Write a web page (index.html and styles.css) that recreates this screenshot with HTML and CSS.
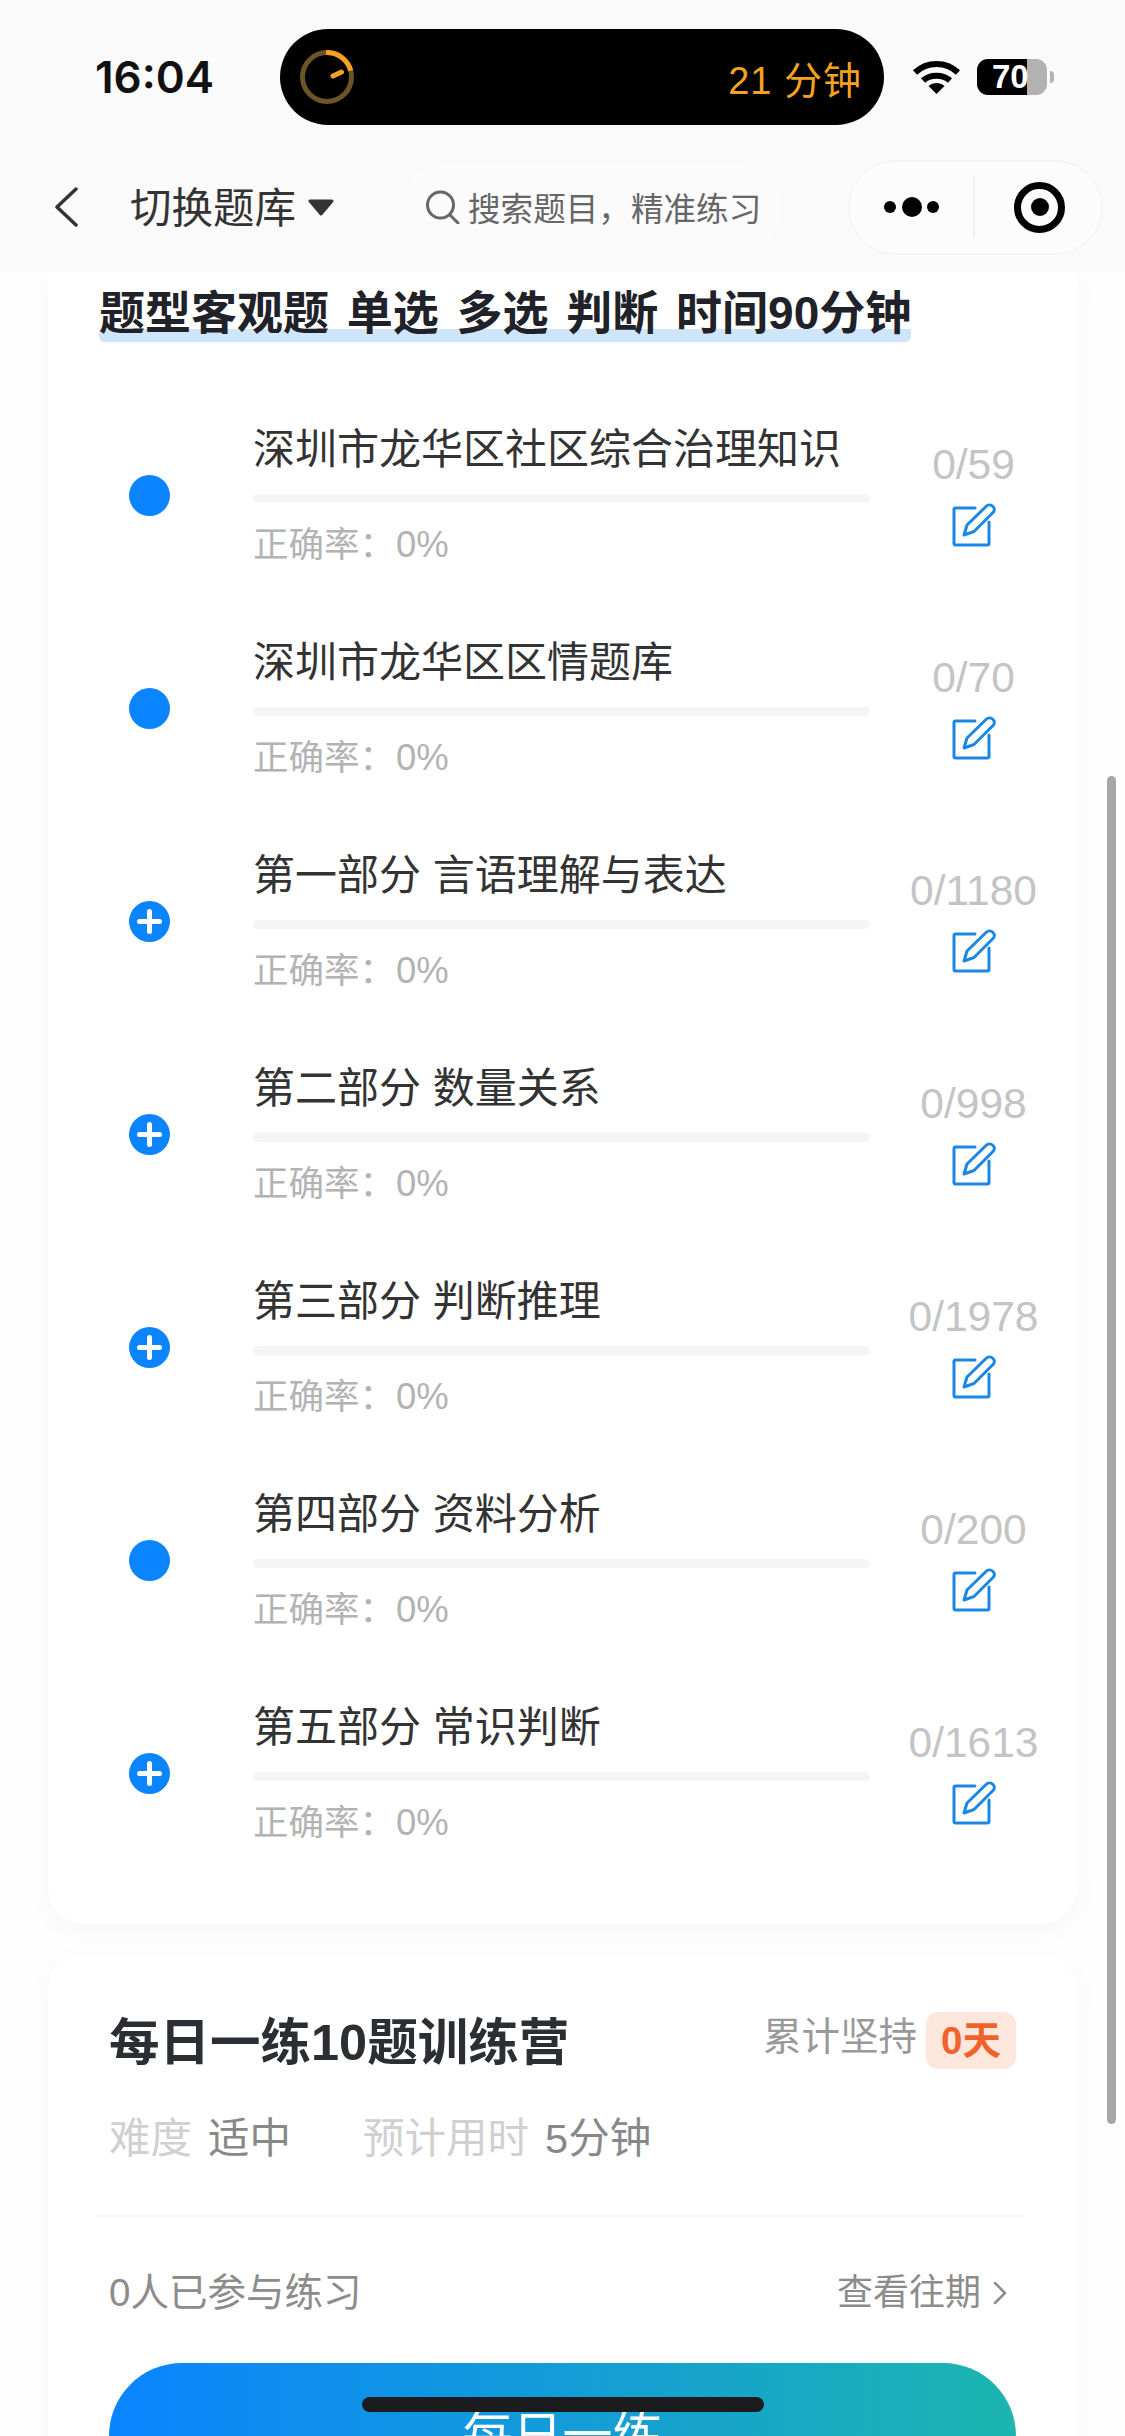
FILE: index.html
```html
<!DOCTYPE html>
<html lang="zh-CN">
<head>
    <meta charset="UTF-8">
    <meta name="viewport" content="width=device-width, initial-scale=1.0">
    <title>切换题库</title>
    <link rel="stylesheet" href="styles.css">
</head>
<body>
<svg class="defs" width="0" height="0">
    <symbol id="edit" viewBox="0 0 44 44">
        <path d="M23 5H3.500A1.500 1.500 0 0 0 2 6.500V40.500A1.500 1.500 0 0 0 3.500 42H35.500A1.500 1.500 0 0 0 37 40.500V19" fill="none" stroke="currentColor" stroke-width="3" stroke-linecap="round"/>
        <path d="M12 32L15 22L34 3.500C36 1.500 39 1.500 41 3.500C43 5.500 42.500 8 41 9.500L22 28.500Z" fill="none" stroke="currentColor" stroke-width="3" stroke-linejoin="round"/>
    </symbol>
</svg>

<div class="screen">
    <div class="top-bars">
        <!-- Status bar -->
        <div class="status-bar">
            <span class="time">16:04</span>
            <div class="island">
                <svg class="timer-ring" width="54" height="54" viewBox="0 0 54 54">
                    <circle cx="27" cy="27" r="24.500" fill="none" stroke="#6b5526" stroke-width="5"/>
                    <path d="M26 2.500A24.500 24.500 0 0 1 50.700 20.700" fill="none" stroke="#f5a31f" stroke-width="5"/>
                    <path d="M33 26L41.500 22" fill="none" stroke="#f5a31f" stroke-width="5" stroke-linecap="round"/>
                </svg>
                <span class="timer-text">21 分钟</span>
            </div>
            <svg class="wifi" width="49" height="34" viewBox="0 0 49 34">
                <path d="M3 12.500C15 1 34 1 46 12.500" fill="none" stroke="#000" stroke-width="6"/>
                <path d="M11 20.500C18 14 31 14 38 20.500" fill="none" stroke="#000" stroke-width="6"/>
                <path d="M24.500 34L16.500 26C21 22 28 22 32.500 26Z" fill="#000"/>
            </svg>
            <div class="battery">70</div>
        </div>

        <!-- Nav bar -->
        <div class="nav-bar">
            <svg class="back" width="24" height="40" viewBox="0 0 24 40">
                <path d="M22 2L3 20L22 38" fill="none" stroke="#333" stroke-width="3.500" stroke-linecap="round" stroke-linejoin="round"/>
            </svg>
            <span class="bank-name">切换题库</span>
            <svg class="caret" width="28" height="17" viewBox="0 0 28 17">
                <path d="M3 2H25L14 15Z" fill="#333" stroke="#333" stroke-width="3" stroke-linejoin="round"/>
            </svg>
            <div class="search">
                <svg width="35" height="34" viewBox="0 0 35 34">
                    <circle cx="15.500" cy="15" r="13" fill="none" stroke="#666" stroke-width="3"/>
                    <path d="M25 25L33 33" fill="none" stroke="#666" stroke-width="3" stroke-linecap="round"/>
                </svg>
                <span class="search-text">搜索题目，精准练习</span>
            </div>
            <div class="capsule">
                <div class="capsule-dots"><i></i><i class="big"></i><i></i></div>
                <div class="capsule-target"><i></i></div>
            </div>
        </div>
    </div>

    <div class="content">
        <!-- Question bank card -->
        <div class="card bank-card">
            <h2 class="bank-title"><span>题型客观题 单选 多选 判断 时间90分钟</span></h2>

            <div class="row">
                <span class="dot"></span>
                <div class="row-main">
                    <div class="row-name">深圳市龙华区社区综合治理知识</div>
                    <div class="progress"></div>
                    <div class="rate">正确率：<span class="rate-num">0%</span></div>
                </div>
                <div class="row-side">
                    <div class="count">0/59</div>
                    <svg class="edit-icon"><use href="#edit"/></svg>
                </div>
            </div>

            <div class="row">
                <span class="dot"></span>
                <div class="row-main">
                    <div class="row-name">深圳市龙华区区情题库</div>
                    <div class="progress"></div>
                    <div class="rate">正确率：<span class="rate-num">0%</span></div>
                </div>
                <div class="row-side">
                    <div class="count">0/70</div>
                    <svg class="edit-icon"><use href="#edit"/></svg>
                </div>
            </div>

            <div class="row">
                <span class="dot plus"></span>
                <div class="row-main">
                    <div class="row-name">第一部分 言语理解与表达</div>
                    <div class="progress"></div>
                    <div class="rate">正确率：<span class="rate-num">0%</span></div>
                </div>
                <div class="row-side">
                    <div class="count">0/1180</div>
                    <svg class="edit-icon"><use href="#edit"/></svg>
                </div>
            </div>

            <div class="row">
                <span class="dot plus"></span>
                <div class="row-main">
                    <div class="row-name">第二部分 数量关系</div>
                    <div class="progress"></div>
                    <div class="rate">正确率：<span class="rate-num">0%</span></div>
                </div>
                <div class="row-side">
                    <div class="count">0/998</div>
                    <svg class="edit-icon"><use href="#edit"/></svg>
                </div>
            </div>

            <div class="row">
                <span class="dot plus"></span>
                <div class="row-main">
                    <div class="row-name">第三部分 判断推理</div>
                    <div class="progress"></div>
                    <div class="rate">正确率：<span class="rate-num">0%</span></div>
                </div>
                <div class="row-side">
                    <div class="count">0/1978</div>
                    <svg class="edit-icon"><use href="#edit"/></svg>
                </div>
            </div>

            <div class="row">
                <span class="dot"></span>
                <div class="row-main">
                    <div class="row-name">第四部分 资料分析</div>
                    <div class="progress"></div>
                    <div class="rate">正确率：<span class="rate-num">0%</span></div>
                </div>
                <div class="row-side">
                    <div class="count">0/200</div>
                    <svg class="edit-icon"><use href="#edit"/></svg>
                </div>
            </div>

            <div class="row">
                <span class="dot plus"></span>
                <div class="row-main">
                    <div class="row-name">第五部分 常识判断</div>
                    <div class="progress"></div>
                    <div class="rate">正确率：<span class="rate-num">0%</span></div>
                </div>
                <div class="row-side">
                    <div class="count">0/1613</div>
                    <svg class="edit-icon"><use href="#edit"/></svg>
                </div>
            </div>
        </div>

        <!-- Daily practice card -->
        <div class="card daily-card">
            <div class="daily-head">
                <h2 class="daily-title">每日一练10题训练营</h2>
                <div class="streak">
                    <span class="streak-label">累计坚持</span>
                    <span class="streak-badge">0天</span>
                </div>
            </div>
            <div class="daily-meta">
                <span class="meta-label">难度</span>
                <span class="meta-value">适中</span>
                <span class="meta-label meta-gap">预计用时</span>
                <span class="meta-value">5分钟</span>
            </div>
            <div class="daily-divider"></div>
            <div class="daily-foot">
                <span class="joined">0人已参与练习</span>
                <span class="history">查看往期
                    <svg width="14" height="24" viewBox="0 0 14 24">
                        <path d="M2 2L12 12L2 22" fill="none" stroke="#8c8c8c" stroke-width="2.500" stroke-linecap="round" stroke-linejoin="round"/>
                    </svg>
                </span>
            </div>
            <div class="start-btn">每日一练</div>
        </div>
    </div>

    <div class="scrollbar"></div>
    <div class="home-bar"></div>
</div>
</body>
</html>
```

FILE: styles.css
```css
* {
    box-sizing: border-box;
}
body {
    margin: 0;
    background-color: #fff;
    font-family: "Liberation Sans", "Noto Sans CJK SC", sans-serif;
    overflow: hidden;
}
.defs {
    display: block;
}
.screen {
    position: relative;
    height: 2436px;
    overflow: hidden;
    background-color: #fefefe;
}
.top-bars {
    position: relative;
    z-index: 1;
    background-color: #fafafa;
}

/* Status bar */
.status-bar {
    display: flex;
    align-items: center;
    height: 154px;
    padding-left: 95px;
}
.time {
    width: 185px;
    font-family: Inter, sans-serif;
    font-size: 44px;
    font-weight: 600;
    color: #111;
}
.island {
    display: flex;
    align-items: center;
    justify-content: space-between;
    width: 604px;
    height: 96px;
    padding: 0 22px 0 20px;
    border-radius: 48px;
    background-color: #000;
}
.timer-text {
    font-size: 38px;
    color: #f5a31f;
    letter-spacing: 1px;
}
.wifi {
    margin-left: 28px;
}
.battery {
    position: relative;
    width: 70px;
    height: 36px;
    margin-left: 16px;
    padding-left: 15px;
    border-radius: 11px;
    background: linear-gradient(90deg, #000 71%, #b2b2b2 71%);
    font-size: 33px;
    font-weight: bold;
    line-height: 36px;
    color: #fff;
}
.battery::after {
    content: "";
    position: absolute;
    left: 73px;
    top: 12px;
    width: 4px;
    height: 12px;
    border-radius: 0 6px 6px 0;
    background-color: #b2b2b2;
}

/* Nav bar */
.nav-bar {
    display: flex;
    align-items: center;
    height: 118px;
    padding: 0 22px 12px 54px;
}
.bank-name {
    margin: 0 0 5px 52px;
    font-size: 41.500px;
    color: #333;
}
.caret {
    margin-left: 11px;
}
.search {
    display: flex;
    align-items: center;
    gap: 8px;
    height: 88px;
    margin-left: 69px;
    padding: 0 21px;
    border-radius: 40px;
    background-color: #fbfbfb;
    font-size: 32.600px;
    color: #666;
    white-space: nowrap;
}
.search-text {
    margin-bottom: 2px;
}
.capsule {
    display: flex;
    align-items: center;
    width: 255px;
    height: 95px;
    margin-left: auto;
    border: 2px solid #f5f5f5;
    border-radius: 48px;
    background-color: #fcfcfc;
}
.capsule-dots {
    display: flex;
    align-items: center;
    justify-content: center;
    gap: 5.500px;
    width: 125px;
    height: 61px;
    border-right: 2px solid #f0f0f0;
}
.capsule-dots i {
    width: 12px;
    height: 12px;
    border-radius: 50%;
    background-color: #000;
}
.capsule-dots .big {
    width: 20px;
    height: 20px;
}
.capsule-target {
    display: flex;
    align-items: center;
    justify-content: center;
    width: 51px;
    height: 51px;
    margin-left: 39px;
    border: 7px solid #000;
    border-radius: 50%;
}
.capsule-target i {
    width: 18px;
    height: 18px;
    border-radius: 50%;
    background-color: #000;
}

/* Cards */
.content {
    padding: 0 48px;
}
.card {
    background-color: #fff;
    border-radius: 36px;
    box-shadow: 0 6px 24px rgba(0, 0, 0, 0.035);
}
.bank-card {
    padding: 12px 0 43px;
    border-radius: 0 0 36px 36px;
}
.bank-title {
    margin: 0 0 48px 51px;
    font-size: 46px;
    font-weight: bold;
    line-height: 58px;
    word-spacing: 5px;
    color: #1f2329;
}
.bank-title span {
    display: inline-block;
    border-radius: 6px;
    background: linear-gradient(#cfe5fb, #cfe5fb) bottom / 100% 13px no-repeat;
    white-space: pre;
}

/* Bank rows */
.row {
    display: flex;
    height: 213px;
    padding: 30px 0 0 81px;
}
.dot {
    position: relative;
    flex: none;
    width: 41px;
    height: 41px;
    margin: 55px 83px 0 0;
    border-radius: 50%;
    background-color: #0a84ff;
}
.plus::before,
.plus::after {
    content: "";
    position: absolute;
    left: 8px;
    top: 18px;
    width: 25px;
    height: 5px;
    border-radius: 3px;
    background-color: #fff;
}
.plus::after {
    transform: rotate(90deg);
}
.row-main {
    width: 617px;
}
.row-name {
    font-size: 42px;
    line-height: 60px;
    color: #333;
    white-space: pre;
}
.progress {
    height: 9px;
    margin-top: 14px;
    border-radius: 5px;
    background-color: #f5f5f5;
}
.rate {
    margin-top: 18px;
    font-size: 35.500px;
    line-height: 48px;
    color: #b3b3b3;
}
.rate-num {
    margin-left: 1px;
    font-size: 36.500px;
}
.row-side {
    display: flex;
    flex: 1;
    flex-direction: column;
    align-items: center;
    padding-top: 20px;
}
.count {
    font-size: 42.500px;
    line-height: 50px;
    color: #c4c4c4;
}
.edit-icon {
    width: 44px;
    height: 44px;
    margin-top: 13px;
    color: #1a86e6;
}

/* Daily practice */
.daily-card {
    height: 600px;
    margin-top: 30px;
    padding: 58px 61px 0;
}
.daily-head {
    display: flex;
    align-items: center;
    justify-content: space-between;
    height: 57px;
}
.daily-title {
    margin: 0;
    padding-top: 3px;
    font-size: 50.500px;
    font-weight: bold;
    line-height: 57px;
    color: #2b2f33;
}
.streak {
    display: flex;
    align-items: center;
    gap: 9px;
    font-size: 38.500px;
    color: #999;
}
.streak-label {
    margin-bottom: 8px;
    line-height: 40px;
}
.streak-badge {
    height: 57px;
    padding: 0 15px;
    border-radius: 12px;
    background-color: #fde6dc;
    font-weight: bold;
    line-height: 57px;
    color: #f0622a;
}
.daily-meta {
    display: flex;
    margin-top: 45px;
    font-size: 41.500px;
    line-height: 50px;
}
.meta-label {
    color: #d0d0d0;
}
.meta-value {
    margin-left: 16px;
    color: #888;
}
.meta-gap {
    margin-left: 72px;
}
.daily-divider {
    height: 2px;
    margin: 51px -8px 0 -14px;
    background-color: #f7f7f7;
}
.daily-foot {
    display: flex;
    align-items: center;
    justify-content: space-between;
    margin-top: 51px;
    line-height: 50px;
    color: #8c8c8c;
}
.joined {
    font-size: 38.500px;
}
.history {
    display: flex;
    align-items: center;
    gap: 12px;
    padding-right: 9px;
    font-size: 36px;
}
.start-btn {
    height: 146px;
    margin-top: 45px;
    border-radius: 73px;
    background: linear-gradient(90deg, #0a84ff, #1cb5b0);
    font-size: 50px;
    line-height: 146px;
    text-align: center;
    color: #fff;
}

/* Overlays */
.scrollbar {
    position: absolute;
    left: 1107px;
    top: 776px;
    width: 9px;
    height: 1348px;
    border-radius: 5px;
    background-color: #a6a6a6;
}
.home-bar {
    position: absolute;
    left: 362px;
    top: 2397px;
    width: 402px;
    height: 15px;
    border-radius: 8px;
    background-color: #1c1c1e;
}
```
